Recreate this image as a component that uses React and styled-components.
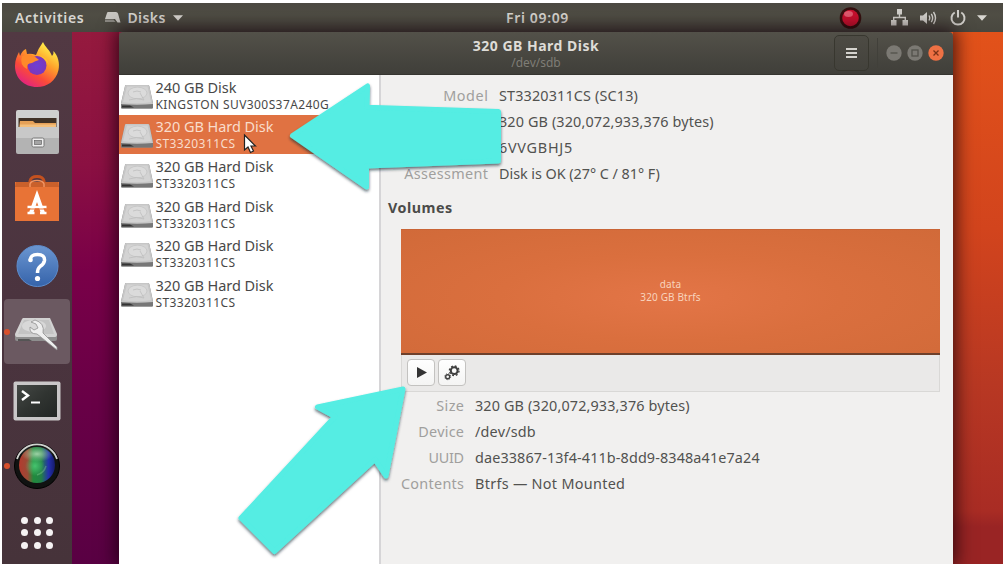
import React from "react";
import styled, { createGlobalStyle } from "styled-components";

const Global = createGlobalStyle`
  * { box-sizing: border-box; }
  html, body { margin: 0; background: #fff; overflow: hidden; }
  body { font-family: "Noto Sans", "Open Sans", sans-serif; color: #4b4b49; }
  svg { display: block; flex: none; }
`;

const Screen = styled.div`
  position: relative;
  width: 1003px;
  height: 564px;
  padding: 3px 0 0 2px;
  display: flex;
  flex-direction: column;
  overflow: hidden;
`;
const TopBar = styled.header`
  height: 29px;
  flex: none;
  display: grid;
  grid-template-columns: 491px auto 1fr;
  align-items: center;
  padding: 0 16px 0 13px;
  background: linear-gradient(#4c4942, #4f4d44 40%, #48473f);
  color: #d8d6d1;
  font-size: 14px;
  font-weight: 600;
`;
const BarGroup = styled.div`
  display: flex;
  align-items: center;
  justify-content: ${(p) => (p.$end ? "flex-end" : "flex-start")};
`;
const BarText = styled.span`
  letter-spacing: ${(p) => p.$ls || 0}px;
  margin-left: ${(p) => p.$ml || 0}px;
  margin-right: ${(p) => p.$mr || 0}px;
  padding-bottom: 1px;
  white-space: nowrap;
`;
const Spacer = styled.span`
  width: ${(p) => p.$w}px;
  flex: none;
`;
const Desktop = styled.div`
  flex: 1;
  min-height: 0;
  display: flex;
  background: linear-gradient(#e2521a 0, #d2441d 37%, #b83823 66%, #a92c24 90%, #992424 93%, #992424 100%) right / 60px 100% no-repeat,
    linear-gradient(#951a3e 0, #8b1042 25%, #790048 45%, #680046 70%, #590043 100%);
`;
const Dock = styled.nav`
  width: 70px;
  flex: none;
  display: flex;
  flex-direction: column;
  background: linear-gradient(#523943, #4b343f 50%, #46333a);
`;
const DockItem = styled.div`
  position: relative;
  height: ${(p) => p.$h || 69}px;
  padding-top: ${(p) => p.$drop || 0}px;
  margin: 0 2px;
  flex: none;
  display: flex;
  align-items: center;
  justify-content: center;
  border-radius: 4px;
  background: ${(p) => (p.$active ? "#6b5961" : "transparent")};
`;
const Dot = styled.i`
  position: absolute;
  left: 0;
  top: calc(50% - 3px);
  width: 6px;
  height: 6px;
  border-radius: 50%;
  background: #d8502c;
`;
const AppsGrid = styled.div`
  display: grid;
  grid-template-columns: repeat(3, 7px);
  gap: 5.5px;
  i { width: 7px; height: 7px; border-radius: 50%; background: #f5f2f3; }
`;
const Window = styled.main`
  width: 834px;
  margin-left: 47px;
  display: flex;
  flex-direction: column;
  box-shadow: 0 0 17px 3px rgba(20, 0, 10, 0.75);
`;
const TitleBar = styled.div`
  height: 43px;
  flex: none;
  display: grid;
  grid-template-columns: 1fr auto 1fr;
  background: linear-gradient(#535149, #45443e 70%, #403f3a);
  border-bottom: 1px solid #363530;
  border-radius: 4px 4px 0 0;
`;
const TitleText = styled.div`
  grid-column: 2;
  text-align: center;
  white-space: nowrap;
  padding-top: 4px;
  color: #dedcd7;
  font-size: 14px;
  line-height: 19px;
  font-weight: 700;
  letter-spacing: ${(p) => p.$ls || 0}px;
`;
const SubTitle = styled.div`
  font-size: 12px;
  line-height: 16px;
  font-weight: 400;
  color: #7f7d76;
  letter-spacing: 0;
`;
const WindowControls = styled.div`
  display: flex;
  justify-content: flex-end;
  padding: 3px 9px 3px 0;
`;
const MenuButton = styled.div`
  width: 35px;
  height: 36px;
  border: 1px solid #38372f;
  border-radius: 5px;
  display: flex;
  flex-direction: column;
  gap: 2px;
  align-items: center;
  justify-content: center;
  background: linear-gradient(#4d4b44, #43423c);
  i { width: 11px; height: 2.3px; background: #d5d3ce; }
`;
const Divider = styled.span`
  width: 1px;
  margin: 3px 8px 3px 8px;
  background: #41403a;
`;
const Controls = styled.div`
  display: flex;
  gap: 5px;
  align-items: center;
`;
const Body = styled.div`
  flex: 1;
  min-height: 0;
  display: flex;
`;
const DiskList = styled.aside`
  width: 262px;
  flex: none;
  background: #fff;
  border-right: 2px solid #d6d5d7;
`;
const DiskRow = styled.div`
  height: 39.6px;
  padding-left: 1px;
  display: flex;
  align-items: center;
  gap: 1.5px;
  color: ${(p) => (p.$selected ? "#f9dccb" : "#484848")};
  background: ${(p) => (p.$selected ? "#e07242" : "transparent")};
  svg { margin-top: 3px; }
`;
const DiskTexts = styled.div`
  white-space: nowrap;
`;
const DiskName = styled.div`
  font-size: 14.5px;
  line-height: 18px;
  margin-bottom: 1px;
  letter-spacing: -0.05px;
`;
const DiskModel = styled.div`
  font-size: 12px;
  line-height: 15px;
  letter-spacing: 0.4px;
`;
const Details = styled.section`
  flex: 1;
  padding: 7px 13px 0 7px;
  background: #f1f0ef;
`;
const FieldGrid = styled.dl`
  margin: 0;
  display: grid;
  grid-template-columns: ${(p) => p.$labels}px 1fr;
  column-gap: 11px;
  grid-auto-rows: 26px;
  align-items: center;
  font-size: 14.4px;
  white-space: nowrap;
`;
const Label = styled.dt`
  text-align: right;
  color: #a09f9d;
  letter-spacing: ${(p) => p.$ls || 0}px;
  margin-right: ${(p) => -(p.$ls || 0)}px;
`;
const Value = styled.dd`
  margin: 0;
  color: #52524f;
  letter-spacing: ${(p) => p.$ls || 0}px;
`;
const Heading = styled.h2`
  margin: 10px 0 9px;
  font-size: 14.3px;
  line-height: 24px;
  font-weight: 700;
  color: #4b4b49;
  letter-spacing: 0.5px;
`;
const VolumeBox = styled.div`
  margin-left: 13px;
  height: 163px;
  display: flex;
  flex-direction: column;
`;
const Volume = styled.div`
  height: 126px;
  display: flex;
  flex-direction: column;
  align-items: center;
  justify-content: center;
  padding-bottom: 2px;
  font-size: 10px;
  line-height: 12.5px;
  letter-spacing: 0.15px;
  color: #f8d3bd;
  border-top: 1px solid #c96435;
  border-bottom: 2px solid #6e402b;
  background: radial-gradient(ellipse at 50% 55%, #e37547, #da6f3e 45%, #d16a39 100%);
`;
const VolumeTools = styled.div`
  flex: 1;
  padding: 4px 5px;
  display: flex;
  gap: 3px;
  background: #eae9e8;
  border: 1px solid #d9d8d6;
  border-top: 0;
`;
const ToolButton = styled.div`
  width: 28px;
  height: 27px;
  display: flex;
  align-items: center;
  justify-content: center;
  padding-left: ${(p) => p.$shift || 0}px;
  border: 1px solid #c3c2c0;
  border-radius: 4px;
  background: linear-gradient(#fff, #f4f4f3);
`;
const Overlay = styled.svg`
  position: absolute;
  left: 0;
  top: 0;
  pointer-events: none;
`;

const DiskIcon = () => (
  <svg width="34" height="25" viewBox="0 0 34 25">
    <path d="M6 1H28Q29 1 29.3 2L33 19V23.5Q33 24.5 32 24.5H2Q1 24.5 1 23.5V19L5 2Q5.200 1 6 1Z" fill="#8d8d8d" />
    <path d="M1 20H33V23.500Q33 24.500 32 24.500H2Q1 24.500 1 23.500Z" fill="#777" />
    <path d="M2 21.500H10L14 23.500H2Z" fill="#333" />
    <path d="M6 1H28Q29 1 29.300 2L33 20Q17 21.500 1 20L5 2Q5.200 1 6 1Z" fill="#c6c6c6" />
    <path d="M7 2.500H27.500L31 18.300Q17 20 3 18.300Z" fill="#d3d3d3" />
    <ellipse cx="17.500" cy="9" rx="9.500" ry="5.800" fill="#dbdbdb" stroke="#c4c4c4" strokeWidth=".8" />
    <path d="M9 16Q17 13 24 16L20 9M13 8Q17 6 21 8" fill="none" stroke="#bebebe" strokeWidth=".8" />
  </svg>
);

const FirefoxIcon = () => (
  <svg width="46" height="47" viewBox="0 0 46 47">
    <defs>
      <linearGradient id="fx" x1=".8" y1=".1" x2=".25" y2=".95">
        <stop offset="0" stopColor="#fff04a" /><stop offset=".35" stopColor="#ffa22b" />
        <stop offset=".7" stopColor="#fb4b38" /><stop offset="1" stopColor="#e4257c" />
      </linearGradient>
      <radialGradient id="fxg"><stop offset="0" stopColor="#6d3fd6" /><stop offset="1" stopColor="#7c37ba" /></radialGradient>
    </defs>
    <path d="M29 1C31 6 36 9 38 15Q40 13 39.500 10C44 15 46 22 44.500 29C42 40 33 46 23 46C10 46 1 37 1 25C1 19 3 15 5 11L6 15C8 11 9 9 12 8L13 13Q17 12 22 14Q24 8 29 1Z" fill="url(#fx)" />
    <circle cx="23" cy="24.500" r="9.500" fill="url(#fxg)" />
    <path d="M8 15Q15 12 20 15L25 19Q21 20 18 22Q12 22 13 28Q5 24 8 15Z" fill="#ff8a2a" />
    <path d="M24 14Q34 16 35 25Q33 18 24 14Z" fill="#ffc52e" />
  </svg>
);
const FilesIcon = () => (
  <svg width="45" height="46" viewBox="0 0 45 46">
    <path d="M3 1H42Q44 1 44 3V22H1V3Q1 1 3 1Z" fill="#cfcfcf" />
    <rect x="3.500" y="9" width="38" height="12" fill="#403126" />
    <path d="M5 12H18L20 14H41V20H4Z" fill="#e5a158" /><path d="M5 15.500H41V20H5Z" fill="#f3bf7c" />
    <path d="M1 18H44V43Q44 45 42 45H3Q1 45 1 43Z" fill="#b3b3b3" />
    <path d="M1 18H44V29H1Z" fill="#c8c8c8" />
    <rect x="17" y="29" width="12" height="9" rx="1.500" fill="#eee" stroke="#777" />
    <rect x="19.500" y="31.500" width="7" height="4" fill="#a5a5a5" stroke="#666" strokeWidth=".7" />
  </svg>
);
const SoftwareIcon = () => (
  <svg width="44" height="47" viewBox="0 0 44 47">
    <path d="M15 10V6Q16 1.500 22 1.500T29 6V10" fill="none" stroke="#c4511f" strokeWidth="3" />
    <path d="M0 7H44V46H0Z" fill="#e87336" /><path d="M1 7H43L44 12H0Z" fill="#c9602b" />
    <path d="M15 12V9Q16 5.500 22 5.500T29 9V12" fill="none" stroke="#f09361" strokeWidth="1.500" />
    <path d="M16 38L22 21L28 38" fill="none" stroke="#fff" strokeWidth="4" />
    <path d="M12.500 32H31.500M12.500 38H19.500M25 38H31.500" stroke="#fff" strokeWidth="2.500" />
    <path d="M13 34H31" stroke="#e87336" />
  </svg>
);
const HelpIcon = () => (
  <svg width="43" height="44" viewBox="0 0 43 44">
    <defs><linearGradient id="hp" x2="0" y2="1"><stop stopColor="#6b96d1" /><stop offset="1" stopColor="#3563aa" /></linearGradient></defs>
    <circle cx="21.500" cy="22" r="20.500" fill="url(#hp)" stroke="#5d8ccc" />
    <path d="M14.500 16.500Q14 10.500 21.500 10.500Q29 10.500 28.500 16.500Q28 20 24 22.500Q21.500 24.500 21.500 29" fill="none" stroke="#fff" strokeWidth="3.500" />
    <circle cx="14.500" cy="16" r="2.300" fill="#fff" /><circle cx="21.500" cy="34.500" r="2.600" fill="#fff" />
  </svg>
);
const DisksAppIcon = () => (
  <svg width="46" height="38" viewBox="0 0 46 38">
    <path d="M1 19H43V24Q43 26 41 26H3Q1 26 1 24Z" fill="#8e8e8e" />
    <path d="M9 3H36L43 19Q43 22 41 22H3Q1 22 1 19L8 4Z" fill="#d2d2d2" />
    <path d="M10 5H35L40 19H4Z" fill="#c3c3c3" />
    <ellipse cx="20" cy="11" rx="12" ry="6" fill="#d8d8d8" />
    <path d="M4 24H15L18 26H4Z" fill="#555" />
    <path d="M17 7L22 9L24 13L20 15L16 12Q15 19 23 19L38 31L43 35L43 32L29 18Q31 8 21 5Z" fill="#eee" stroke="#909090" strokeWidth=".8" />
  </svg>
);
const TerminalIcon = () => (
  <svg width="48" height="40" viewBox="0 0 48 40">
    <defs><linearGradient id="tm" x2="1" y2="1"><stop stopColor="#444845" /><stop offset=".5" stopColor="#303431" /><stop offset="1" stopColor="#222624" /></linearGradient></defs>
    <rect x=".5" y=".5" width="47" height="39" rx="2" fill="#c9c7c8" />
    <rect x="4" y="4" width="40" height="32" fill="url(#tm)" />
    <path d="M9 10L15 14.500L9 19" fill="none" stroke="#fff" strokeWidth="2.400" /><path d="M18 21.500H27" stroke="#fff" strokeWidth="2" />
  </svg>
);
const LensIcon = () => (
  <svg width="48" height="48" viewBox="0 0 48 48">
    <defs>
      <linearGradient id="ln"><stop stopColor="#b33a2e" /><stop offset=".24" stopColor="#9a4b36" /><stop offset=".4" stopColor="#218a3d" /><stop offset=".62" stopColor="#238047" /><stop offset=".82" stopColor="#2430ae" /><stop offset="1" stopColor="#151a6a" /></linearGradient>
      <radialGradient id="lg"><stop stopColor="#4fd27a" stopOpacity=".8" /><stop offset="1" stopColor="#4fd27a" stopOpacity="0" /></radialGradient>
      <radialGradient id="lt"><stop stopColor="#c5ebc6" stopOpacity=".75" /><stop offset="1" stopColor="#a9d8ae" stopOpacity="0" /></radialGradient>
    </defs>
    <circle cx="24" cy="24" r="22.500" fill="#101211" stroke="#000" />
    <path d="M4 17A21 21 0 0 1 44 17" fill="none" stroke="#d0d3cf" strokeWidth="1.700" />
    <circle cx="24" cy="23" r="18" fill="url(#ln)" />
    <ellipse cx="24" cy="12" rx="16" ry="8" fill="url(#lt)" />
    <circle cx="22" cy="24" r="10" fill="url(#lg)" />
    <path d="M24 33Q31 31 33 24" stroke="#95d99b" strokeWidth="1.500" fill="none" opacity=".35" />
  </svg>
);
const DriveGlyph = () => (
  <svg width="17" height="13" viewBox="0 0 17 13">
    <path d="M4 1H12Q13.500 1 14 2.500L16.500 11.500H13.500L11 8H1L3 2Q3.300 1 4 1Z" fill="#c9c7c2" /><path d="M1 8.500H9.500L11.500 11H1Z" fill="#8a8882" />
  </svg>
);
const Caret = ({ w = 10 }) => (
  <svg width={w} height="6" viewBox="0 0 10 6"><path d="M0 .300H10L5 5.800Z" fill="#d8d6d1" /></svg>
);
const RecordIcon = () => (
  <svg width="23" height="22" viewBox="0 0 23 22">
    <circle cx="11.500" cy="11" r="10.800" fill="#35100f" /><circle cx="11.500" cy="11" r="8.300" fill="#c8102e" />
    <ellipse cx="9.500" cy="7" rx="4.500" ry="3" fill="#f3889a" opacity=".6" />
  </svg>
);
const NetworkIcon = () => (
  <svg width="17" height="17" viewBox="0 0 17 17" fill="#d2d0cb">
    <path d="M6 0H11V5.500H6ZM0 11H5.500V16.500H0ZM11.500 11H17V16.500H11.500Z" /><path d="M8.500 5V8.500M2.700 11V8.500H14.300V11" fill="none" stroke="#d2d0cb" strokeWidth="1.400" />
  </svg>
);
const SoundIcon = () => (
  <svg width="17" height="14" viewBox="0 0 17 14">
    <path d="M0 4.500H3L7 1V13L3 9.500H0Z" fill="#d2d0cb" />
    <path d="M9 4.500Q10.500 7 9 9.500M11.300 2.800Q14 7 11.300 11.200M13.500 1Q17.500 7 13.500 13" fill="none" stroke="#d2d0cb" strokeWidth="1.400" />
  </svg>
);
const PowerIcon = () => (
  <svg width="16" height="16" viewBox="0 0 16 16" fill="none" stroke="#d2d0cb" strokeWidth="2">
    <path d="M4.700 2.500A6.500 6.500 0 1 0 11.300 2.500M8 0V7.500" />
  </svg>
);
const WindowButton = ({ kind }) => {
  const close = kind === "close";
  return (
    <svg width="16" height="16" viewBox="0 0 16 16">
      <circle cx="8" cy="8" r="7.700" fill={close ? "#ef7144" : "#7b7973"} />
      <g stroke={close ? "#7b3217" : "#52514b"} strokeWidth="1.300" fill="none">
        {kind === "min" && <path d="M4.500 8H11.500" />}
        {kind === "max" && <rect x="5" y="5" width="6" height="6" />}
        {close && <path d="M5.500 5.500L10.500 10.500M10.500 5.500L5.500 10.500" />}
      </g>
    </svg>
  );
};
const GearsIcon = () => (
  <svg width="16" height="16" viewBox="0 0 16 16" fill="none" stroke="#3f3f3f">
    <circle cx="10.200" cy="5.700" r="3.400" strokeWidth="2" />
    <circle cx="10.200" cy="5.700" r="4.800" strokeWidth="1.400" strokeDasharray="1.900 1.870" />
    <circle cx="3.700" cy="11.700" r="2" strokeWidth="1.400" />
    <circle cx="3.700" cy="11.700" r="3" strokeWidth=".8" strokeDasharray="1.200 1.160" />
  </svg>
);

const disks = [
  ["240 GB Disk", "KINGSTON SUV300S37A240G"],
  ["320 GB Hard Disk", "ST3320311CS"],
  ["320 GB Hard Disk", "ST3320311CS"],
  ["320 GB Hard Disk", "ST3320311CS"],
  ["320 GB Hard Disk", "ST3320311CS"],
  ["320 GB Hard Disk", "ST3320311CS"],
];
const driveFields = [
  ["Model", "ST3320311CS (SC13)", 0.6, 0.15],
  ["Size", "320 GB (320,072,933,376 bytes)", 0.3, 0.13],
  ["Serial Number", "6VVGBHJ5", 0, 0.75],
  ["Assessment", "Disk is OK (27° C / 81° F)", 0.35, -0.04],
];
const volumeFields = [
  ["Size", "320 GB (320,072,933,376 bytes)", 0.4, 0.13],
  ["Device", "/dev/sdb", 0.25, 0.2],
  ["UUID", "dae33867-13f4-411b-8dd9-8348a41e7a24", -0.3, 0.12],
  ["Contents", "Btrfs — Not Mounted", 0.3, 0.3],
];

const Fields = ({ rows, labels }) => (
  <FieldGrid $labels={labels}>
    {rows.map(([label, value, labelSpacing, valueSpacing]) => (
      <React.Fragment key={label}>
        <Label $ls={labelSpacing}>{label}</Label>
        <Value $ls={valueSpacing}>{value}</Value>
      </React.Fragment>
    ))}
  </FieldGrid>
);

export default function App() {
  return (
    <Screen>
      <Global />
      <TopBar>
        <BarGroup>
          <BarText $mr={20} $ls={0.7}>Activities</BarText>
          <DriveGlyph />
          <BarText $ml={6} $mr={7} $ls={0.4}>Disks</BarText>
          <Caret />
        </BarGroup>
        <BarText $ls={0.65}>Fri 09:09</BarText>
        <BarGroup $end>
          <RecordIcon /><Spacer $w={29} />
          <NetworkIcon /><Spacer $w={12} />
          <SoundIcon /><Spacer $w={13} />
          <PowerIcon /><Spacer $w={11} />
          <Caret />
        </BarGroup>
      </TopBar>
      <Desktop>
        <Dock>
          <DockItem $h={64}><FirefoxIcon /></DockItem>
          <DockItem $h={72}><FilesIcon /></DockItem>
          <DockItem $h={61}><SoftwareIcon /></DockItem>
          <DockItem $h={70} $drop={4}><HelpIcon /></DockItem>
          <DockItem $h={65} $drop={4} $active><Dot /><DisksAppIcon /></DockItem>
          <DockItem $h={73}><TerminalIcon /></DockItem>
          <DockItem $h={58}><Dot /><LensIcon /></DockItem>
          <DockItem $h={75}><AppsGrid>{Array.from({ length: 9 }, (_, i) => <i key={i} />)}</AppsGrid></DockItem>
        </Dock>
        <Window>
          <TitleBar>
            <TitleText $ls={0.5}>320 GB Hard Disk<SubTitle>/dev/sdb</SubTitle></TitleText>
            <WindowControls>
              <MenuButton><i /><i /><i /></MenuButton>
              <Divider />
              <Controls><WindowButton kind="min" /><WindowButton kind="max" /><WindowButton kind="close" /></Controls>
            </WindowControls>
          </TitleBar>
          <Body>
            <DiskList>
              {disks.map(([name, model], i) => (
                <DiskRow key={i} $selected={i === 1}>
                  <DiskIcon />
                  <DiskTexts><DiskName>{name}</DiskName><DiskModel>{model}</DiskModel></DiskTexts>
                </DiskRow>
              ))}
            </DiskList>
            <Details>
              <Fields rows={driveFields} labels={100} />
              <Heading>Volumes</Heading>
              <VolumeBox>
                <Volume><span>data</span><span>320 GB Btrfs</span></Volume>
                <VolumeTools>
                  <ToolButton $shift={2}><svg width="10" height="11" viewBox="0 0 10 11"><path d="M0 0L10 5.500L0 11Z" fill="#333" /></svg></ToolButton>
                  <ToolButton><GearsIcon /></ToolButton>
                </VolumeTools>
              </VolumeBox>
              <Fields rows={volumeFields} labels={76} />
            </Details>
          </Body>
        </Window>
      </Desktop>
      <Overlay width="1003" height="564" viewBox="0 0 1003 564">
        <defs><filter id="sh" x="-10%" y="-10%" width="120%" height="120%"><feDropShadow dx="0" dy="2" stdDeviation="1.500" floodColor="#123" floodOpacity=".65" /></filter></defs>
        <path d="M244.500 135V150L248 147L250.500 152.500L253.500 151L251 146H255.500Z" fill="#fff" stroke="#222" strokeWidth="1.200" />
        <g fill="#54ede3" stroke="#54ede3" strokeWidth="5" strokeLinejoin="round" filter="url(#sh)">
          <path d="M292.500 135.700L367.500 86L367 107.200L498.500 111.500V161L366.500 166V187Z" />
          <path d="M403 389L386 476L375 459.500L274.500 551.500L241 518L335 416.500L317.500 407Z" />
        </g>
      </Overlay>
    </Screen>
  );
}
